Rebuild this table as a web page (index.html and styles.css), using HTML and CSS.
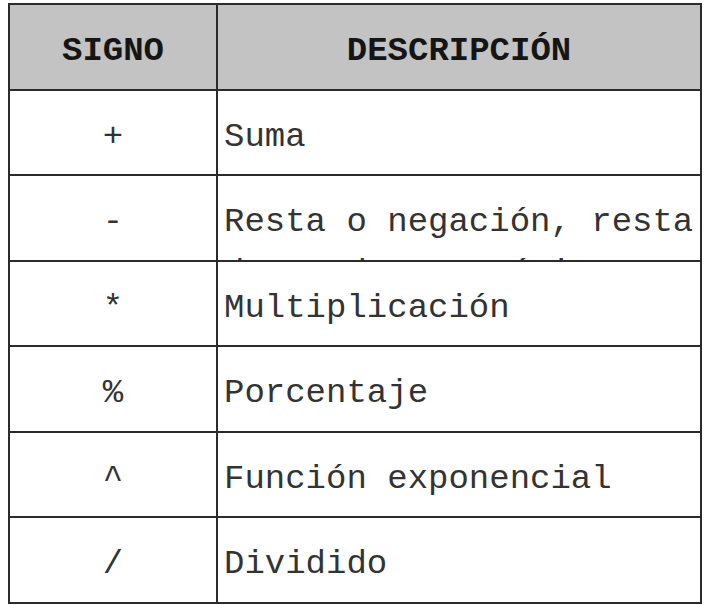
FILE: index.html
```html
<!DOCTYPE html>
<html lang="es">
<head>
<meta charset="utf-8">
<title>Operadores</title>
<link rel="stylesheet" href="styles.css">
</head>
<body>
<div class="ops">
  <div class="cell head sign">SIGNO</div>
  <div class="cell head">DESCRIPCIÓN</div>

  <div class="cell sign">+</div>
  <div class="cell desc">Suma</div>

  <div class="cell sign">-</div>
  <div class="cell desc">Resta o negación, resta de un dato numérico</div>

  <div class="cell sign">*</div>
  <div class="cell desc">Multiplicación</div>

  <div class="cell sign">%</div>
  <div class="cell desc">Porcentaje</div>

  <div class="cell sign">^</div>
  <div class="cell desc">Función exponencial</div>

  <div class="cell sign">/</div>
  <div class="cell desc">Dividido</div>
</div>
</body>
</html>
```

FILE: styles.css
```css
html, body {
  margin: 0;
  padding: 0;
  background: #ffffff;
}

.ops {
  box-sizing: border-box;
  margin: 3px 0 0 8px;
  width: 694px;
  height: 601px;
  display: grid;
  grid-template-columns: 206px 482px;
  grid-auto-rows: 1fr;
  gap: 2px;
  border: 2px solid #2b2b2b;
  background: #2b2b2b;
  font-family: "Liberation Mono", "DejaVu Sans Mono", monospace;
  font-size: 34px;
  line-height: 51px;
  color: #333333;
}

.cell {
  background: #ffffff;
  padding: 21px 6px 0 6px;
  overflow: hidden;
  min-height: 0;
}

.head {
  background: #c3c3c3;
  color: #151515;
  font-weight: bold;
  text-align: center;
}

.sign {
  text-align: center;
}

.desc {
  text-align: left;
}
```
